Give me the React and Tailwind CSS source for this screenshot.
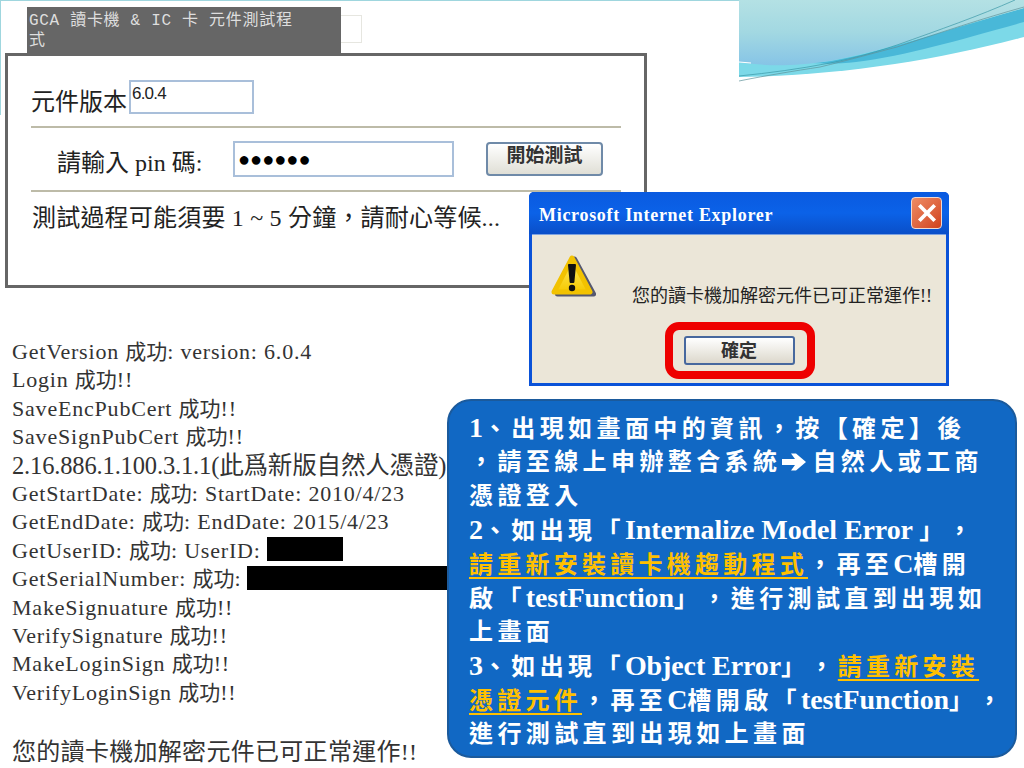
const serif = "font-['Liberation_Serif','Noto_Sans_CJK_TC',serif]";

const logLines = [
  "GetVersion 成功: version: 6.0.4",
  "Login 成功!!",
  "SaveEncPubCert 成功!!",
  "SaveSignPubCert 成功!!",
  "2.16.886.1.100.3.1.1(此爲新版自然人憑證)",
  "GetStartDate: 成功: StartDate: 2010/4/23",
  "GetEndDate: 成功: EndDate: 2015/4/23",
  "GetUserID: 成功: UserID:",
  "GetSerialNumber: 成功:",
  "MakeSignuature 成功!!",
  "VerifySignature 成功!!",
  "MakeLoginSign 成功!!",
  "VerifyLoginSign 成功!!",
];

const Wave = () => (
  <svg viewBox="0 0 285 82" className="h-[82px] w-[285px]">
    <defs>
      <linearGradient id="sky" x1="0" y1="0" x2="0" y2="1">
        <stop offset="0" stopColor="#b4e1e4" />
        <stop offset="0.5" stopColor="#a2d8e2" />
        <stop offset="1" stopColor="#86c4e6" />
      </linearGradient>
    </defs>
    <path d="M0 60L285 8V37C200 60 100 76 0 77Z" fill="#7cd9e8" />
    <path d="M74 63C120 60 200 32 285 8V22C220 40 170 55 117 62C100 64 85 64 74 63Z" fill="#49b8d8" />
    <path d="M0 0H285V8C200 32 140 52 90 61C50 67 25 66 0 62Z" fill="url(#sky)" />
    <path d="M0 76C30 73 60 69 91 63C120 57 140 51 158 45C200 30 240 16 276 0" fill="none" stroke="#3b98a6" strokeWidth="0.7" />
    <path d="M0 81C30 75 55 71 81 67C110 60 135 53 158 47C200 33 245 18 285 7" fill="none" stroke="#5f929a" strokeWidth="0.7" />
    <path d="M0 62L12 63" fill="none" stroke="#ffffff" strokeWidth="1" />
  </svg>
);

const WarningIcon = () => (
  <svg viewBox="0 0 46 46" className="h-[46px] w-[46px]">
    <defs>
      <linearGradient id="warn" x1="0" y1="0" x2="0" y2="1">
        <stop offset="0" stopColor="#fff06a" />
        <stop offset="1" stopColor="#f6c800" />
      </linearGradient>
    </defs>
    <path d="M23 6L42 41H6Z" fill="#555870" strokeLinejoin="round" stroke="#555870" strokeWidth="5" transform="translate(1.5 1)" />
    <path d="M22 6L40 40H4Z" fill="url(#warn)" strokeLinejoin="round" stroke="#f2c200" strokeWidth="5" />
    <path d="M19 13H25L23.4 30H20.6Z" fill="#111" strokeLinejoin="round" stroke="#111" strokeWidth="2" />
    <circle cx="22" cy="36" r="3.2" fill="#111" />
  </svg>
);

const BlockArrow = () => (
  <svg viewBox="0 0 26 20" className="mr-[5px] inline-block h-[20px] w-[26px] align-[-2px]">
    <path d="M1 7H14L10 1.5H15L25 10L15 18.5H10L14 13H1Z" fill="#fff" />
  </svg>
);

const LogLine = ({ line, big }) => (
  <div className={`h-[28.4px] whitespace-nowrap leading-[28.4px] ${big ? "text-[24.5px] tracking-[-0.15px]" : "text-[21px]"}`}>
    {line.split(/([\u4e00-\u9fff]+)/).map((part, i) =>
      i % 2 === 1 || big ? (
        <span key={i}>{part}</span>
      ) : (
        <span key={i} className="text-[22px] tracking-[0.8px]">{part}</span>
      )
    )}
  </div>
);

const Cjk = ({ children }) => <span className="tracking-[4.4px]">{children}</span>;

const Latin = ({ children, className = "" }) => <span className={`text-[28px] tracking-[-0.1px] ${className}`}>{children}</span>;

const Gold = ({ children }) => (
  <span className="tracking-[4.25px] text-[#ffc000] underline underline-offset-4 decoration-2 [text-decoration-skip-ink:none]">
    {children}
  </span>
);

const NoteRow = ({ children }) => <div className="h-[34px] whitespace-nowrap">{children}</div>;

export default function App() {
  return (
    <div lang="zh-Hant" className={`relative h-[768px] w-[1024px] overflow-hidden bg-white [text-spacing-trim:space-all] ${serif}`}>
      {/* slide edge lines */}
      <div className="absolute left-0 top-0 h-px w-[739px] bg-[#9fd6de]" />
      <div className="absolute left-0 top-0 h-[115px] w-px bg-[#9fd6de]" />

      <div className="absolute left-[739px] top-0">
        <Wave />
      </div>

      {/* test window */}
      <div className="absolute left-[27px] top-[7px] h-[47px] w-[314px] bg-[#666666] pl-[2px] pt-[4px] font-['Liberation_Mono','Noto_Sans_CJK_TC',monospace] text-[16px] leading-[20px] tracking-[0.7px] text-[#dedede]">
        GCA 讀卡機 &amp; IC 卡 元件測試程
        <br />
        式
      </div>
      <div className="absolute left-[341px] top-[15px] h-[28px] w-[21px] border border-l-0 border-[#e6e6e0]" />

      <div className="absolute left-[5px] top-[53px] h-[235px] w-[642px] border-[3px] border-[#666666] bg-white text-[#222]">
        <div className="mx-[23px] flex h-[72px] items-end border-b-2 border-[#bdbba8] pb-[7px]">
          <div className="flex items-start">
            <span className="text-[24px] leading-[34px]">元件版本</span>
            <div className="-mt-[5px] ml-[2px] flex h-[34px] w-[125px] items-start border-2 border-[#a9bfda] pl-[1px] font-['Liberation_Sans',sans-serif] text-[17px] leading-[24px] tracking-[-0.8px]">
              6.0.4
            </div>
          </div>
        </div>
        <div className="mx-[23px] flex h-[64px] items-center border-b-2 border-[#bdbba8]">
          <span className="ml-[26px] mt-[8px] w-[176px] text-[24px] leading-[34px]">請輸入 pin 碼:</span>
          <div className="flex h-[36px] w-[221px] items-center border-2 border-[#a9bfda] pl-[3px] text-[20px] text-black">
            ●●●●●●
          </div>
          <button className="ml-[32px] h-[34px] w-[117px] rounded-[4px] border-2 border-[#6f8aa8] bg-gradient-to-b from-white to-[#e0dfd6] pb-2 text-[19px] font-bold leading-none text-[#333]">
            開始測試
          </button>
        </div>
        <div className="ml-[24px] mt-[9px] whitespace-nowrap text-[24px] leading-[34px] tracking-[0.2px]">
          測試過程可能須要 1 ~ 5 分鐘，請耐心等候...
        </div>
      </div>

      {/* log output */}
      <div className="absolute left-[12px] top-[338px] w-[435px] overflow-hidden text-[#333]">
        {logLines.map((line, i) => (
          <LogLine key={line} line={line} big={i === 4} />
        ))}
        <div className="mt-[31px] whitespace-nowrap text-[24px] leading-[28px] tracking-[0.3px]">
          您的讀卡機加解密元件已可正常運作!!
        </div>
      </div>
      <div className="absolute left-[267px] top-[537px] h-[24px] w-[76px] bg-black" />
      <div className="absolute left-[247px] top-[566px] h-[24px] w-[200px] bg-black" />

      {/* IE alert */}
      <div className="absolute left-[529px] top-[192px] flex h-[194px] w-[420px] flex-col rounded-t-[5px] bg-[#0a52d8]">
        <div className="flex h-[42px] shrink-0 items-center justify-between rounded-t-[5px] bg-gradient-to-b from-[#0a5ae0] via-[#0b62e8] to-[#0a4fc8] pl-[10px] pr-[7px]">
          <span className="pt-1 text-[18px] font-bold tracking-[0.7px] text-white">Microsoft Internet Explorer</span>
          <div className="flex h-[32px] w-[31px] items-center justify-center rounded-[4px] border border-[#f0d8d0] bg-gradient-to-br from-[#ee8c64] to-[#d0401c]">
            <svg viewBox="0 0 20 20" className="h-[22px] w-[22px]">
              <path d="M3 3L17 17M17 3L3 17" stroke="#fff" strokeWidth="3.4" />
            </svg>
          </div>
        </div>
        <div className="relative mx-[3px] mb-[3px] flex-1 border-t border-[#7da2e0] bg-[#ebe6d8]">
          <div className="absolute left-[18px] top-[17px]">
            <WarningIcon />
          </div>
          <div className="absolute left-[100px] top-[49px] whitespace-nowrap text-[18px] leading-[24px] text-[#222]">
            您的讀卡機加解密元件已可正常運作!!
          </div>
          <div className="absolute left-[133px] top-[87px] flex h-[57px] w-[150px] items-center justify-center rounded-[14px] border-[8px] border-[#ee0000]">
            <button className="-ml-[2px] h-[29px] w-[111px] rounded-[3px] border-2 border-[#47689e] bg-gradient-to-b from-white to-[#dcd8cc] text-[18px] font-bold leading-none text-[#333]">
              確定
            </button>
          </div>
        </div>
      </div>

      {/* note box */}
      <div className="absolute left-[447px] top-[399px] h-[359px] w-[570px] rounded-[24px] border-2 border-[#1b5a9c] bg-[#1168c4] pl-[20px] pt-[10px] text-[24px] font-bold leading-[34px] text-white">
        <NoteRow><Latin>1</Latin><Cjk>、出現如畫面中的資訊，按【確定】後</Cjk></NoteRow>
        <NoteRow><Cjk>，請至線上申辦整合系統</Cjk><BlockArrow /><Cjk>自然人或工商</Cjk></NoteRow>
        <NoteRow><Cjk>憑證登入</Cjk></NoteRow>
        <NoteRow><Latin>2</Latin><Cjk>、如出現「</Cjk><Latin>Internalize Model Error </Latin><Cjk>」，</Cjk></NoteRow>
        <NoteRow><Gold>請重新安裝讀卡機趨動程式</Gold><Cjk>，再至</Cjk><Latin>C</Latin><Cjk>槽開</Cjk></NoteRow>
        <NoteRow><Cjk>啟「</Cjk><Latin>testFunction</Latin><Cjk>」，進行測試直到出現如</Cjk></NoteRow>
        <NoteRow><Cjk>上畫面</Cjk></NoteRow>
        <NoteRow><Latin>3</Latin><Cjk>、如出現「</Cjk><Latin>Object Error</Latin><Cjk>」，</Cjk><Gold>請重新安裝</Gold></NoteRow>
        <NoteRow><Gold>憑證元件</Gold><Cjk>，再至</Cjk><Latin>C</Latin><Cjk>槽開啟「</Cjk><Latin>testFunction</Latin><Cjk>」，</Cjk></NoteRow>
        <NoteRow><Cjk>進行測試直到出現如上畫面</Cjk></NoteRow>
      </div>
    </div>
  );
}
